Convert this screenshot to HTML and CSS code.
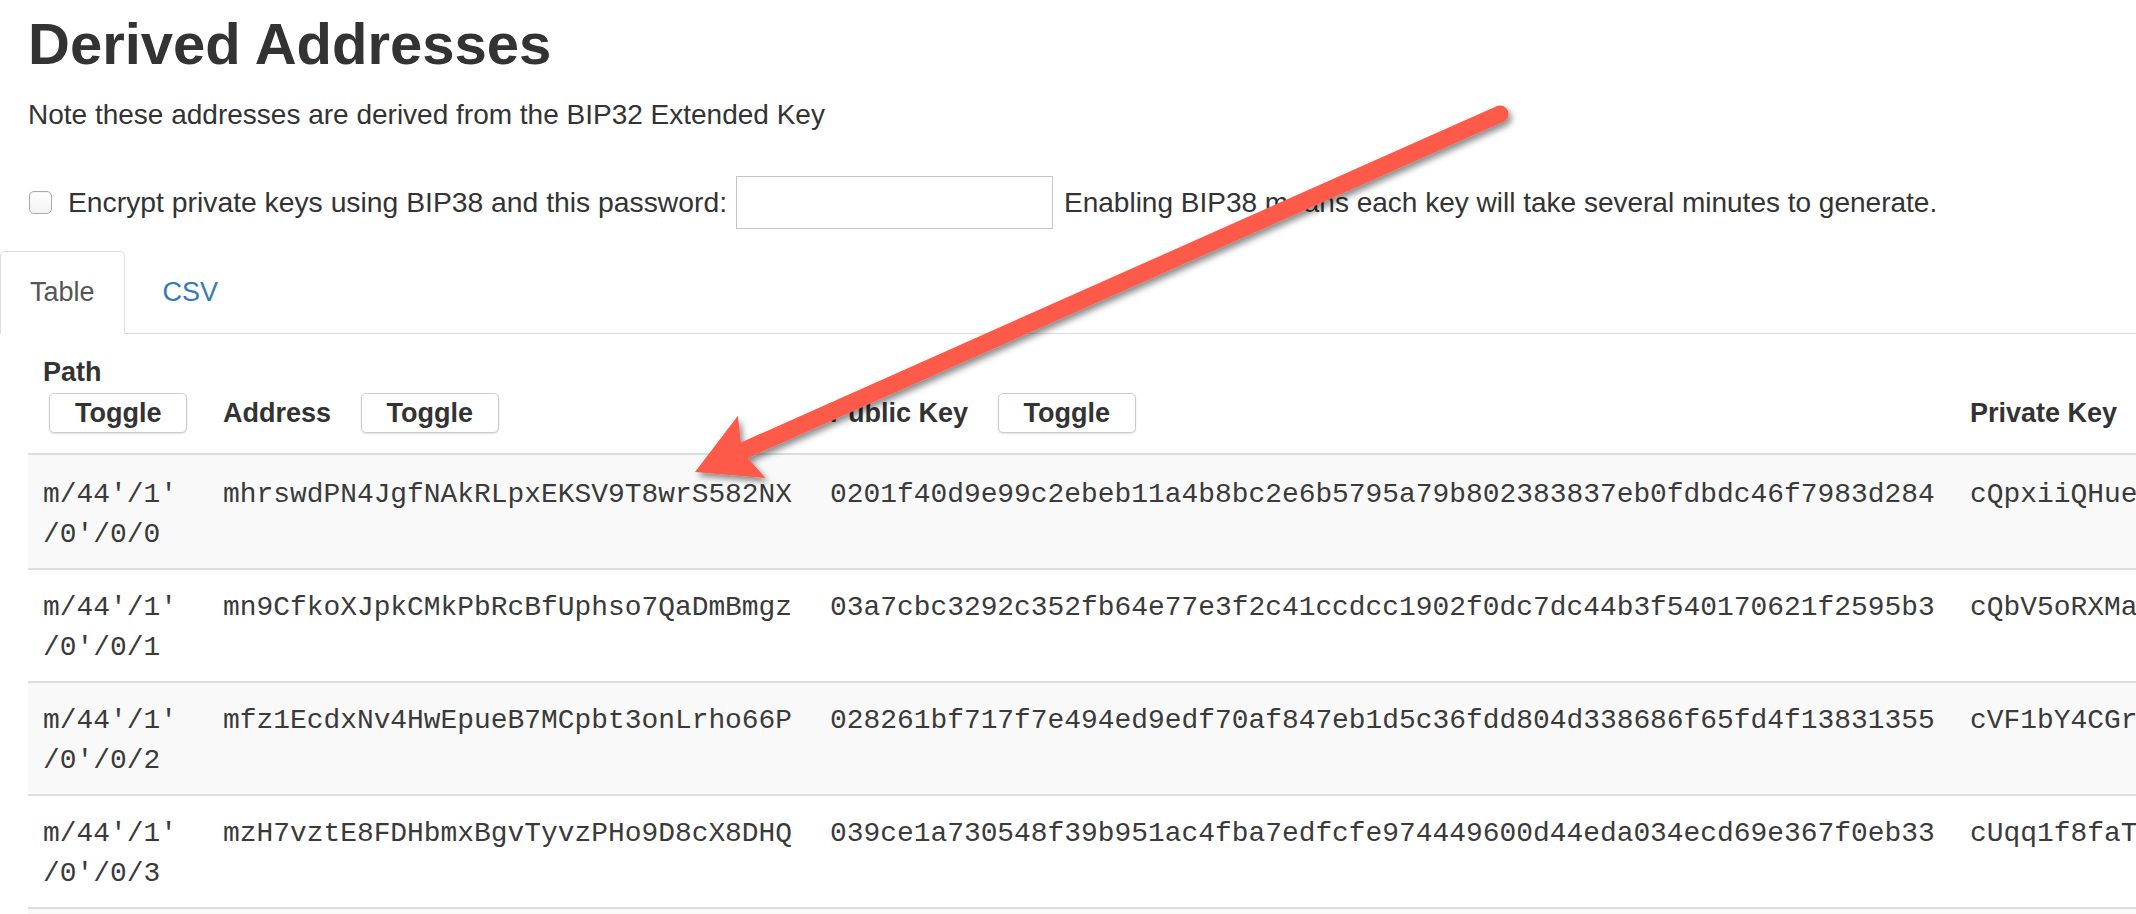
FILE: index.html
```html
<!DOCTYPE html>
<html lang="en">
<head>
<meta charset="utf-8">
<title>Derived Addresses</title>
<link rel="stylesheet" href="styles.css">
</head>
<body>
<div class="page">
  <h1 class="title">Derived Addresses</h1>
  <p class="note">Note these addresses are derived from the BIP32 Extended Key</p>
  <div class="bip38">
    <label class="check-label"><input class="check" type="checkbox"><span>Encrypt private keys using BIP38 and this password:</span></label>
    <input class="pw" type="text">
    <span class="warn">Enabling BIP38 means each key will take several minutes to generate.</span>
  </div>
</div>

<ul class="tabs">
  <li class="tab active">Table</li>
  <li class="tab"><a class="tab-link" href="#csv">CSV</a></li>
</ul>

<div class="table-wrap">
  <table class="addr-table">
    <colgroup>
      <col class="c-path">
      <col class="c-addr">
      <col class="c-pub">
      <col class="c-priv">
    </colgroup>
    <thead>
      <tr>
        <th class="th-path"><span class="th-label">Path</span><button class="toggle toggle-block">Toggle</button></th>
        <th>Address <button class="toggle">Toggle</button></th>
        <th>Public Key <button class="toggle">Toggle</button></th>
        <th>Private Key</th>
      </tr>
    </thead>
    <tbody>
      <tr>
        <td class="path"><span class="seg">m/44'/1'</span><wbr><span class="seg">/0'/0/0</span></td>
        <td>mhrswdPN4JgfNAkRLpxEKSV9T8wrS582NX</td>
        <td>0201f40d9e99c2ebeb11a4b8bc2e6b5795a79b802383837eb0fdbdc46f7983d284</td>
        <td>cQpxiiQHue</td>
      </tr>
      <tr>
        <td class="path"><span class="seg">m/44'/1'</span><wbr><span class="seg">/0'/0/1</span></td>
        <td>mn9CfkoXJpkCMkPbRcBfUphso7QaDmBmgz</td>
        <td>03a7cbc3292c352fb64e77e3f2c41ccdcc1902f0dc7dc44b3f540170621f2595b3</td>
        <td>cQbV5oRXMa</td>
      </tr>
      <tr>
        <td class="path"><span class="seg">m/44'/1'</span><wbr><span class="seg">/0'/0/2</span></td>
        <td>mfz1EcdxNv4HwEpueB7MCpbt3onLrho66P</td>
        <td>028261bf717f7e494ed9edf70af847eb1d5c36fdd804d338686f65fd4f13831355</td>
        <td>cVF1bY4CGr</td>
      </tr>
      <tr>
        <td class="path"><span class="seg">m/44'/1'</span><wbr><span class="seg">/0'/0/3</span></td>
        <td>mzH7vztE8FDHbmxBgvTyvzPHo9D8cX8DHQ</td>
        <td>039ce1a730548f39b951ac4fba7edfcfe974449600d44eda034ecd69e367f0eb33</td>
        <td>cUqq1f8faT</td>
      </tr>
      <tr class="filler">
        <td></td>
        <td></td>
        <td></td>
        <td></td>
      </tr>
    </tbody>
  </table>
</div>

<svg class="arrow" width="2136" height="914" viewBox="0 0 2136 914" aria-hidden="true">
  <defs>
    <filter id="arrow-shadow" filterUnits="userSpaceOnUse" x="600" y="50" width="1000" height="520">
      <feDropShadow dx="3" dy="4" stdDeviation="3" flood-color="#000" flood-opacity="0.45"/>
    </filter>
  </defs>
  <g filter="url(#arrow-shadow)" fill="#fd5a4a">
    <line x1="736" y1="454" x2="1500" y2="114" stroke="#fd5a4a" stroke-width="17" stroke-linecap="round"/>
    <polygon points="695,472 737.9,415.8 740.9,442.3 747.8,457.9 765.5,477.9"/>
  </g>
</svg>
</body>
</html>
```

FILE: styles.css
```css
html, body {
  margin: 0;
  padding: 0;
  overflow: hidden;
  background: #fff;
}

body {
  font-family: "Liberation Sans", Arial, Helvetica, sans-serif;
  color: #333;
  width: 2136px;
  height: 914px;
  position: relative;
}

.page {
  padding-left: 28px;
}

.title {
  margin: 12px 0 0;
  font-size: 58px;
  line-height: 64px;
  font-weight: 700;
  color: #333;
}

.note {
  margin: 20px 0 0;
  font-size: 28px;
  line-height: 38px;
}

.bip38 {
  display: flex;
  align-items: center;
  margin-top: 42px;
  height: 53px;
  font-size: 28.3px;
}

.check-label {
  display: flex;
  align-items: center;
}

.check {
  appearance: none;
  -webkit-appearance: none;
  box-sizing: border-box;
  width: 23px;
  height: 23px;
  margin: 0 16px 0 1px;
  border: 1px solid #a9a9a9;
  border-radius: 5px;
  background: linear-gradient(#fff, #f2f2f2);
  box-shadow: inset 0 1px 1px rgba(0, 0, 0, 0.06);
}

.pw {
  box-sizing: border-box;
  width: 317px;
  height: 53px;
  margin: 0 11px 0 9px;
  border: 1px solid #c6c6c6;
  border-radius: 0;
  padding: 0 8px;
  font-size: 24px;
  background: #fff;
}

.warn {
  font-size: 28px;
}

.tabs {
  list-style: none;
  margin: 22px 0 0;
  padding: 0;
  display: flex;
  border-bottom: 1px solid #ddd;
  font-size: 27px;
}

.tab {
  padding: 0 29px;
  line-height: 81px;
  border: 1px solid transparent;
  border-radius: 5px 5px 0 0;
  margin: 0 8px -1px 0;
  color: #555;
}

.tab.active {
  border-color: #ddd;
  border-bottom-color: transparent;
  background: #fff;
}

.tab-link {
  color: #337ab7;
  text-decoration: none;
}

.table-wrap {
  padding-left: 28px;
  overflow: hidden;
}

.addr-table {
  table-layout: fixed;
  width: 2827px;
  border-collapse: collapse;
  border-spacing: 0;
}

.c-path { width: 177px; }
.c-addr { width: 607px; }
.c-pub { width: 1140px; }
.c-priv { width: 903px; }

.addr-table th {
  text-align: left;
  vertical-align: bottom;
  font-size: 27px;
  font-weight: 700;
  line-height: 40px;
  padding: 22px 18px 20px;
  border-bottom: 2px solid #ddd;
  white-space: nowrap;
}

.addr-table th:first-child,
.addr-table td:first-child {
  padding-left: 15px;
}

.th-label {
  display: block;
  line-height: 32px;
  margin-bottom: 5px;
}

.toggle {
  box-sizing: border-box;
  height: 40px;
  padding: 0 25px;
  margin-left: 22px;
  border: 1px solid #ccc;
  border-radius: 5px;
  background: #fff;
  box-shadow: 0 1px 2px rgba(0, 0, 0, 0.12);
  font-family: "Liberation Sans", Arial, sans-serif;
  font-size: 27px;
  font-weight: 700;
  color: #333;
  line-height: 38px;
  vertical-align: baseline;
}

.toggle-block {
  display: block;
  margin-left: 6px;
}

.addr-table td {
  font-family: "Liberation Mono", "Courier New", monospace;
  font-size: 27.9px;
  line-height: 40px;
  color: #3a3a3a;
  padding: 18px 18px 13px;
  border-top: 2px solid #ddd;
  vertical-align: top;
  white-space: nowrap;
  overflow: hidden;
}

.addr-table tbody tr:first-child td {
  padding-top: 20px;
}

.addr-table td.path {
  white-space: normal;
}

.seg {
  white-space: nowrap;
}

.addr-table tbody tr:nth-child(odd) td {
  background: #f9f9f9;
}

.addr-table tr.filler td {
  height: 80px;
}

.arrow {
  position: absolute;
  left: 0;
  top: 0;
  pointer-events: none;
}
```
